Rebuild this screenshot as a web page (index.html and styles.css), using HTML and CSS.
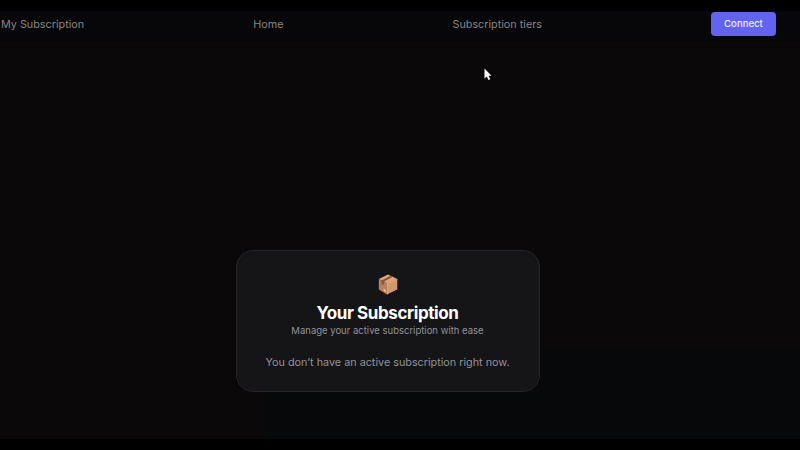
FILE: index.html
```html
<!DOCTYPE html>
<html lang="en">
<head>
<meta charset="utf-8">
<title>Your Subscription</title>
<link rel="stylesheet" href="styles.css">
</head>
<body>
<div class="app">
  <nav class="nav">
    <a class="nav-link">My Subscription</a>
    <a class="nav-link">Home</a>
    <a class="nav-link">Subscription tiers</a>
    <button class="connect">Connect</button>
  </nav>
  <main class="content">
    <section class="card">
      <svg class="box" viewBox="0 0 20 21" aria-hidden="true">
        <path fill="#dfa47c" d="M10 .5 19.3 5 9 9.6.8 5Z"/>
        <path fill="#b9805f" d="M.8 5 9 9.6V20.5L.8 15.6Z"/>
        <path fill="#d3976d" d="M9 9.6 19.3 5V15.6L9 20.5Z"/>
        <path fill="#855442" d="M12.6 1.8 14.8 2.8 5.8 7.8V11L3.5 9.7V6.5Z"/>
        <path fill="#e5b28b" d="M9 9.6 19.3 5V5.8L9.6 10.2V20.2L9 20.5Z"/>
        <path fill="#e6cbbb" d="m5.7 14.7 2 1.2v2.2l-2-1.2Z"/>
      </svg>
      <h1 class="title">Your Subscription</h1>
      <p class="subtitle">Manage your active subscription with ease</p>
      <p class="message">You don’t have an active subscription right now.</p>
    </section>
  </main>
  <svg class="cursor" viewBox="0 0 8 13" aria-hidden="true">
    <path fill="#fff" d="M.5.5V10.5L2.8 8.5 4.5 12 6.2 11.2 4.7 7.8H7.5Z"/>
  </svg>
</div>
</body>
</html>
```
FILE: styles.css
```css
* { box-sizing: border-box; margin: 0; }

body {
  background: #000;
  padding: 11px 0;
  height: 450px;
  overflow: hidden;
  font-family: Inter, "Liberation Sans", sans-serif;
}

.app {
  position: relative;
  display: flex;
  flex-direction: column;
  height: 428px;
  background:
    linear-gradient(#07080a, #07080a) right bottom / 260px 90px no-repeat,
    linear-gradient(#07080a, #07080a) right bottom / 536px 46px no-repeat,
    #0a0809;
}

.nav {
  display: flex;
  justify-content: space-between;
  align-items: flex-start;
  height: 31px;
  padding: 1px 24px 0 1px;
  background: #07070a;
}

.nav-link {
  font-size: 10.8px;
  line-height: 25px;
  color: #8b8282;
}

.connect {
  width: 65px;
  height: 24px;
  padding: 0;
  border: 0;
  border-radius: 4px;
  background: #6264f0;
  color: #f0f0ff;
  font: 500 9.6px/24px Inter, sans-serif;
}

.content {
  display: flex;
  justify-content: center;
  padding: 208px 25px 0 0;
}

.card {
  display: flex;
  flex-direction: column;
  align-items: center;
  width: 304px;
  height: 142px;
  padding-top: 23px;
  border: 1px solid #252527;
  border-radius: 17px;
  background: #151517;
}

.box { width: 20px; height: 21px; }

.title {
  margin-top: 8px;
  font-size: 17px;
  font-weight: 700;
  line-height: 20px;
  letter-spacing: -0.4px;
  color: #fff;
}

.subtitle {
  margin-top: 1px;
  font-size: 9.5px;
  line-height: 14px;
  color: #929298;
}

.message {
  margin-top: 17px;
  font-size: 10.8px;
  line-height: 16px;
  color: #929298;
}

.cursor {
  position: absolute;
  left: 484px;
  top: 57px;
  width: 8px;
  height: 13px;
}
```
